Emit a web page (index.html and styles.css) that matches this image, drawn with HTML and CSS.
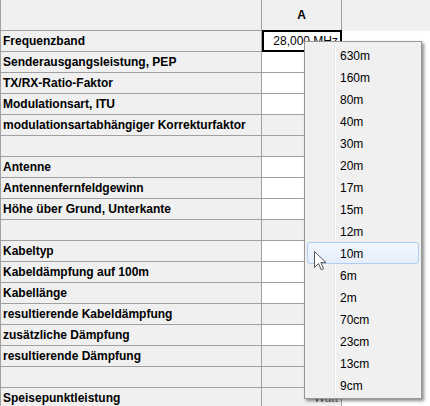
FILE: index.html
```html
<!DOCTYPE html>
<html>
<head>
<meta charset="utf-8">
<link rel="stylesheet" href="styles.css">
</head>
<body>
<div class="sheet">
  <div class="row head">
    <div class="label"></div>
    <div class="value gray colhead">A</div>
    <div class="rest"></div>
  </div>
  <div class="row"><div class="label">Frequenzband</div><div class="value white sel"><span>28,000 MHz</span><div class="selbox"></div></div><div class="rest"></div></div>
  <div class="row"><div class="label">Senderausgangsleistung, PEP</div><div class="value white"></div><div class="rest"></div></div>
  <div class="row"><div class="label">TX/RX-Ratio-Faktor</div><div class="value white"></div><div class="rest"></div></div>
  <div class="row"><div class="label">Modulationsart, ITU</div><div class="value white"></div><div class="rest"></div></div>
  <div class="row"><div class="label">modulationsartabhängiger Korrekturfaktor</div><div class="value gray"></div><div class="rest"></div></div>
  <div class="row"><div class="label"></div><div class="value gray"></div><div class="rest"></div></div>
  <div class="row"><div class="label">Antenne</div><div class="value white"></div><div class="rest"></div></div>
  <div class="row"><div class="label">Antennenfernfeldgewinn</div><div class="value white"></div><div class="rest"></div></div>
  <div class="row"><div class="label">Höhe über Grund, Unterkante</div><div class="value white"></div><div class="rest"></div></div>
  <div class="row"><div class="label"></div><div class="value gray"></div><div class="rest"></div></div>
  <div class="row"><div class="label">Kabeltyp</div><div class="value white"></div><div class="rest"></div></div>
  <div class="row"><div class="label">Kabeldämpfung auf 100m</div><div class="value white"></div><div class="rest"></div></div>
  <div class="row"><div class="label">Kabellänge</div><div class="value white"></div><div class="rest"></div></div>
  <div class="row"><div class="label">resultierende Kabeldämpfung</div><div class="value gray"></div><div class="rest"></div></div>
  <div class="row"><div class="label">zusätzliche Dämpfung</div><div class="value white"></div><div class="rest"></div></div>
  <div class="row"><div class="label">resultierende Dämpfung</div><div class="value gray"></div><div class="rest"></div></div>
  <div class="row"><div class="label"></div><div class="value gray"></div><div class="rest"></div></div>
  <div class="row"><div class="label">Speisepunktleistung</div><div class="value gray unit"><span>Watt</span></div><div class="rest"></div></div>
</div>

<div class="menu">
  <div class="item">630m</div>
  <div class="item">160m</div>
  <div class="item">80m</div>
  <div class="item">40m</div>
  <div class="item">30m</div>
  <div class="item">20m</div>
  <div class="item">17m</div>
  <div class="item">15m</div>
  <div class="item">12m</div>
  <div class="item hot">10m</div>
  <div class="item">6m</div>
  <div class="item">2m</div>
  <div class="item">70cm</div>
  <div class="item">23cm</div>
  <div class="item">13cm</div>
  <div class="item">9cm</div>
</div>

<svg class="cursor" width="13" height="20" viewBox="0 0 13 20">
  <path d="M0.5 0.5 L0.5 16.5 L4.5 12.5 L7.3 18.8 L9.6 17.8 L6.9 11.6 L12 11.6 Z" fill="#fff" stroke="#555" stroke-width="1" stroke-linejoin="miter"/>
</svg>
</body>
</html>
```

FILE: styles.css
```css
html, body {
  margin: 0;
  padding: 0;
  background: #fff;
}
body {
  width: 430px;
  height: 406px;
  overflow: hidden;
  position: relative;
  font-family: "Liberation Sans", Arial, sans-serif;
  font-size: 12px;
  color: #000;
}
.sheet {
  display: flex;
  flex-direction: column;
}
.row {
  display: flex;
  height: 21px;
}
.row.head {
  height: 31px;
  background: #f0f0f0;
}
.label {
  box-sizing: border-box;
  width: 262px;
  flex: none;
  background: #f0f0f0;
  border-left: 1px solid #a0a0a0;
  border-right: 1px solid #a0a0a0;
  border-bottom: 1px solid #a0a0a0;
  padding-left: 2px;
  font-weight: bold;
  line-height: 20px;
  white-space: nowrap;
  overflow: hidden;
}
.value {
  box-sizing: border-box;
  width: 80px;
  flex: none;
  border-right: 1px solid #a0a0a0;
  border-bottom: 1px solid #a0a0a0;
  line-height: 20px;
  text-align: right;
  padding-right: 3px;
  position: relative;
  white-space: nowrap;
}
.white { background: #fff; }
.gray { background: #f0f0f0; }
.colhead {
  text-align: center;
  padding-right: 0;
  font-weight: bold;
  line-height: 30px;
}
.rest {
  flex: 1;
}
.unit span {
  color: #6d6d6d;
}
.selbox {
  position: absolute;
  left: 0;
  top: -1px;
  right: -1px;
  bottom: -1px;
  border: 2px solid #000;
}

.menu {
  position: absolute;
  left: 304px;
  top: 41px;
  width: 118px;
  box-sizing: border-box;
  background: #f0f0f0;
  border: 1px solid #979797;
  padding: 2px;
  box-shadow: 2px 2px 3px rgba(0, 0, 0, 0.45);
  display: flex;
  flex-direction: column;
}
.menu::before {
  content: "";
  position: absolute;
  left: 29px;
  top: 2px;
  bottom: 2px;
  width: 1px;
  background: #e2e3e3;
  border-right: 1px solid #fff;
}
.item {
  position: relative;
  box-sizing: border-box;
  height: 22px;
  line-height: 22px;
  padding-left: 32px;
  border: 1px solid transparent;
  border-radius: 3px;
}
.item.hot {
  border-color: #aecdf3;
  background: linear-gradient(#f3f7fd, #e4edfa);
}
.cursor {
  position: absolute;
  left: 314px;
  top: 251px;
}
```
